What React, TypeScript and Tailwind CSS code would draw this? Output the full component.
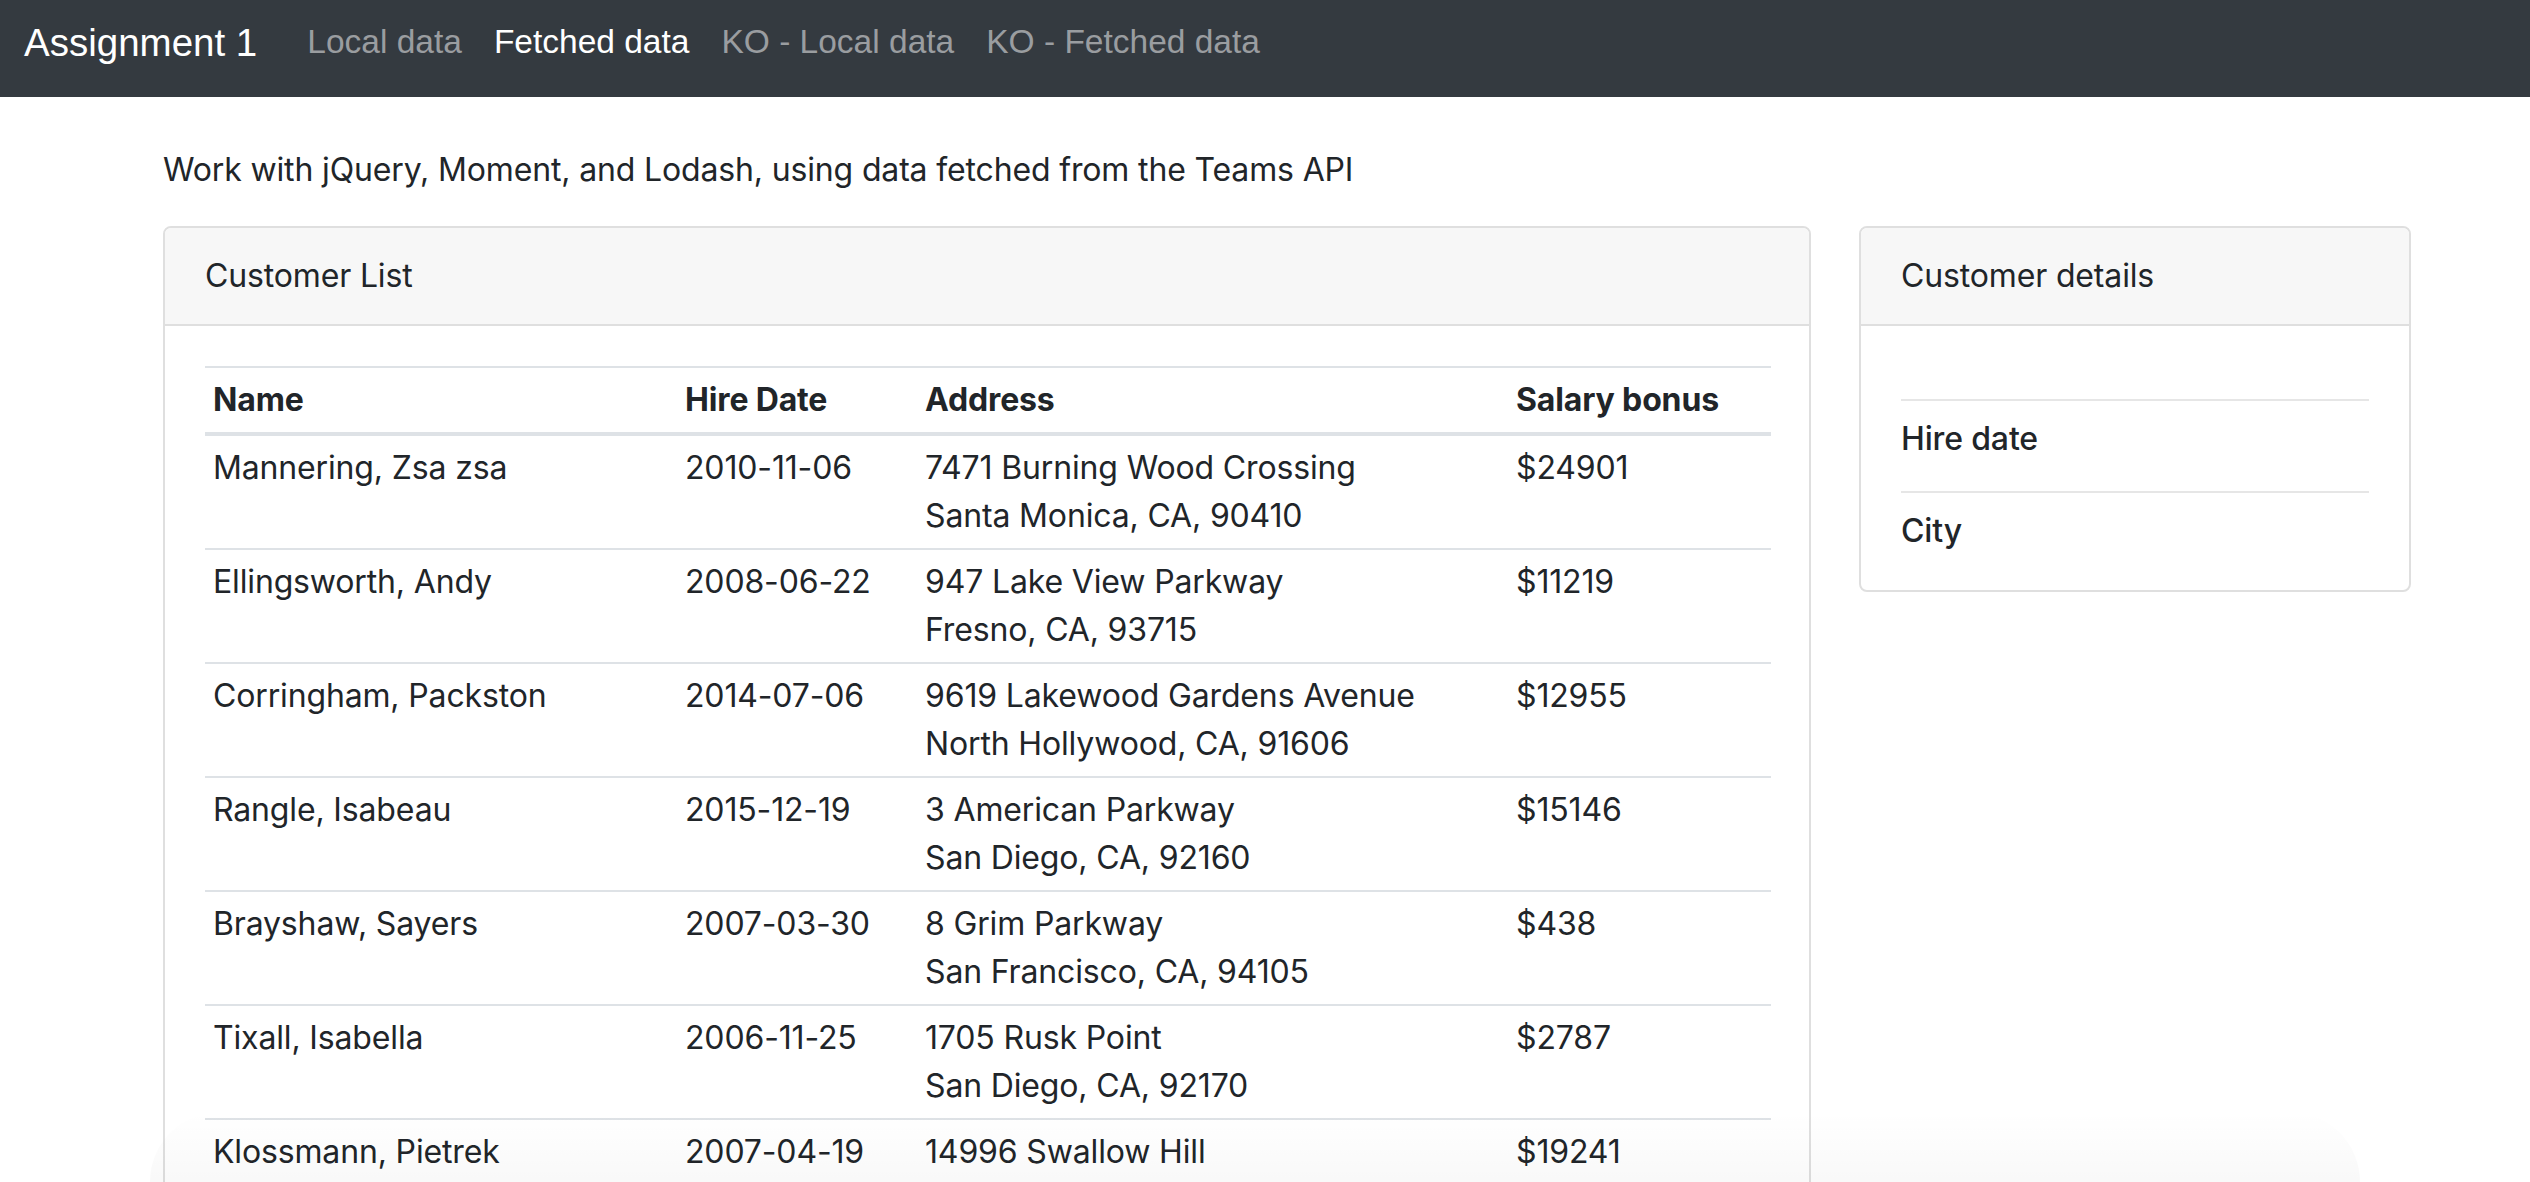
import React from "react";

const customers = [
    { name: "Mannering, Zsa zsa", hired: "2010-11-06", street: "7471 Burning Wood Crossing", city: "Santa Monica, CA, 90410", bonus: "$24901" },
    { name: "Ellingsworth, Andy", hired: "2008-06-22", street: "947 Lake View Parkway", city: "Fresno, CA, 93715", bonus: "$11219" },
    { name: "Corringham, Packston", hired: "2014-07-06", street: "9619 Lakewood Gardens Avenue", city: "North Hollywood, CA, 91606", bonus: "$12955" },
    { name: "Rangle, Isabeau", hired: "2015-12-19", street: "3 American Parkway", city: "San Diego, CA, 92160", bonus: "$15146" },
    { name: "Brayshaw, Sayers", hired: "2007-03-30", street: "8 Grim Parkway", city: "San Francisco, CA, 94105", bonus: "$438" },
    { name: "Tixall, Isabella", hired: "2006-11-25", street: "1705 Rusk Point", city: "San Diego, CA, 92170", bonus: "$2787" },
    { name: "Klossmann, Pietrek", hired: "2007-04-19", street: "14996 Swallow Hill", city: "Sacramento, CA, 94263", bonus: "$19241" },
]

const links = [
    { label: "Local data", active: false },
    { label: "Fetched data", active: true },
    { label: "KO - Local data", active: false },
    { label: "KO - Fetched data", active: false },
]

const Navbar = () => {
    return (
        <nav className="h-[97px] bg-[#343a40] flex items-center pb-[12px] px-[24px] font-['Liberation_Sans',Arial,sans-serif]">
            <span className="text-[38.5px] text-white mr-[34px]">Assignment 1</span>
            <div className="flex items-center">
                {links.map((l) => (
                    <span
                        key={l.label}
                        className={`text-[33.5px] px-[16px] ${l.active ? "text-white" : "text-[#9a9da0]"}`}
                    >
                        {l.label}
                    </span>
                ))}
            </div>
        </nav>
    )
}

const CustomerList = () => {
    return (
        <div className="w-[1648px] shrink-0 border-2 border-[#dfdfdf] rounded-[8px] overflow-hidden">
            <div className="bg-[#f7f7f7] border-b-2 border-[#dfdfdf] px-[40px] py-[24px] leading-[48px]">
                Customer List
            </div>
            <div className="p-[40px]">
                <table className="w-[1566px] border-collapse table-fixed">
                    <colgroup>
                        <col className="w-[472px]" />
                        <col className="w-[240px]" />
                        <col className="w-[591px]" />
                        <col className="w-[263px]" />
                    </colgroup>
                    <thead>
                        <tr>
                            {["Name", "Hire Date", "Address", "Salary bonus"].map((h) => (
                                <th
                                    key={h}
                                    className="text-left font-bold px-[8px] py-[8px] leading-[48px] border-t-2 border-b-4 border-[#dee2e6]"
                                >
                                    {h}
                                </th>
                            ))}
                        </tr>
                    </thead>
                    <tbody>
                        {customers.map((c) => (
                            <tr key={c.name} className="align-top">
                                <td className="px-[8px] py-[8px] leading-[48px] border-b-2 border-[#dee2e6]">{c.name}</td>
                                <td className="px-[8px] py-[8px] leading-[48px] border-b-2 border-[#dee2e6]">{c.hired}</td>
                                <td className="px-[8px] py-[8px] leading-[48px] border-b-2 border-[#dee2e6]">
                                    {c.street}
                                    <br />
                                    {c.city}
                                </td>
                                <td className="px-[8px] py-[8px] leading-[48px] border-b-2 border-[#dee2e6]">{c.bonus}</td>
                            </tr>
                        ))}
                    </tbody>
                </table>
            </div>
        </div>
    )
}

const CustomerDetails = () => {
    return (
        <div className="w-[552px] shrink-0 self-start border-2 border-[#dfdfdf] rounded-[8px] overflow-hidden">
            <div className="bg-[#f7f7f7] border-b-2 border-[#dfdfdf] px-[40px] py-[24px] leading-[48px]">
                Customer details
            </div>
            <div className="px-[40px] pt-[40px] pb-[35px]">
                <div className="h-[33px]" />
                <div className="border-t-2 border-[#e6e6e6] pt-[14px] mb-[28px] leading-[48px] font-medium">
                    Hire date
                </div>
                <div className="border-t-2 border-[#e6e6e6] pt-[14px] leading-[48px] font-medium">
                    City
                </div>
            </div>
        </div>
    )
}

export default function App() {
    return (
        <div className="relative h-[1182px] overflow-hidden bg-white text-[#212529]">
            <Navbar />
            <main className="pl-[163px] pt-[49px] text-[32px] font-['Inter','Noto_Sans',sans-serif] tracking-[-0.15px]">
                <p className="leading-[48px] mb-[32px]">
                    Work with jQuery, Moment, and Lodash, using data fetched from the Teams API
                </p>
                <div className="flex gap-[48px]">
                    <CustomerList />
                    <CustomerDetails />
                </div>
            </main>
            <div className="absolute left-[150px] w-[2210px] top-[1112px] h-[140px] rounded-[70px] bg-gradient-to-b from-black/0 to-black/[0.05] pointer-events-none" />
        </div>
    )
}
